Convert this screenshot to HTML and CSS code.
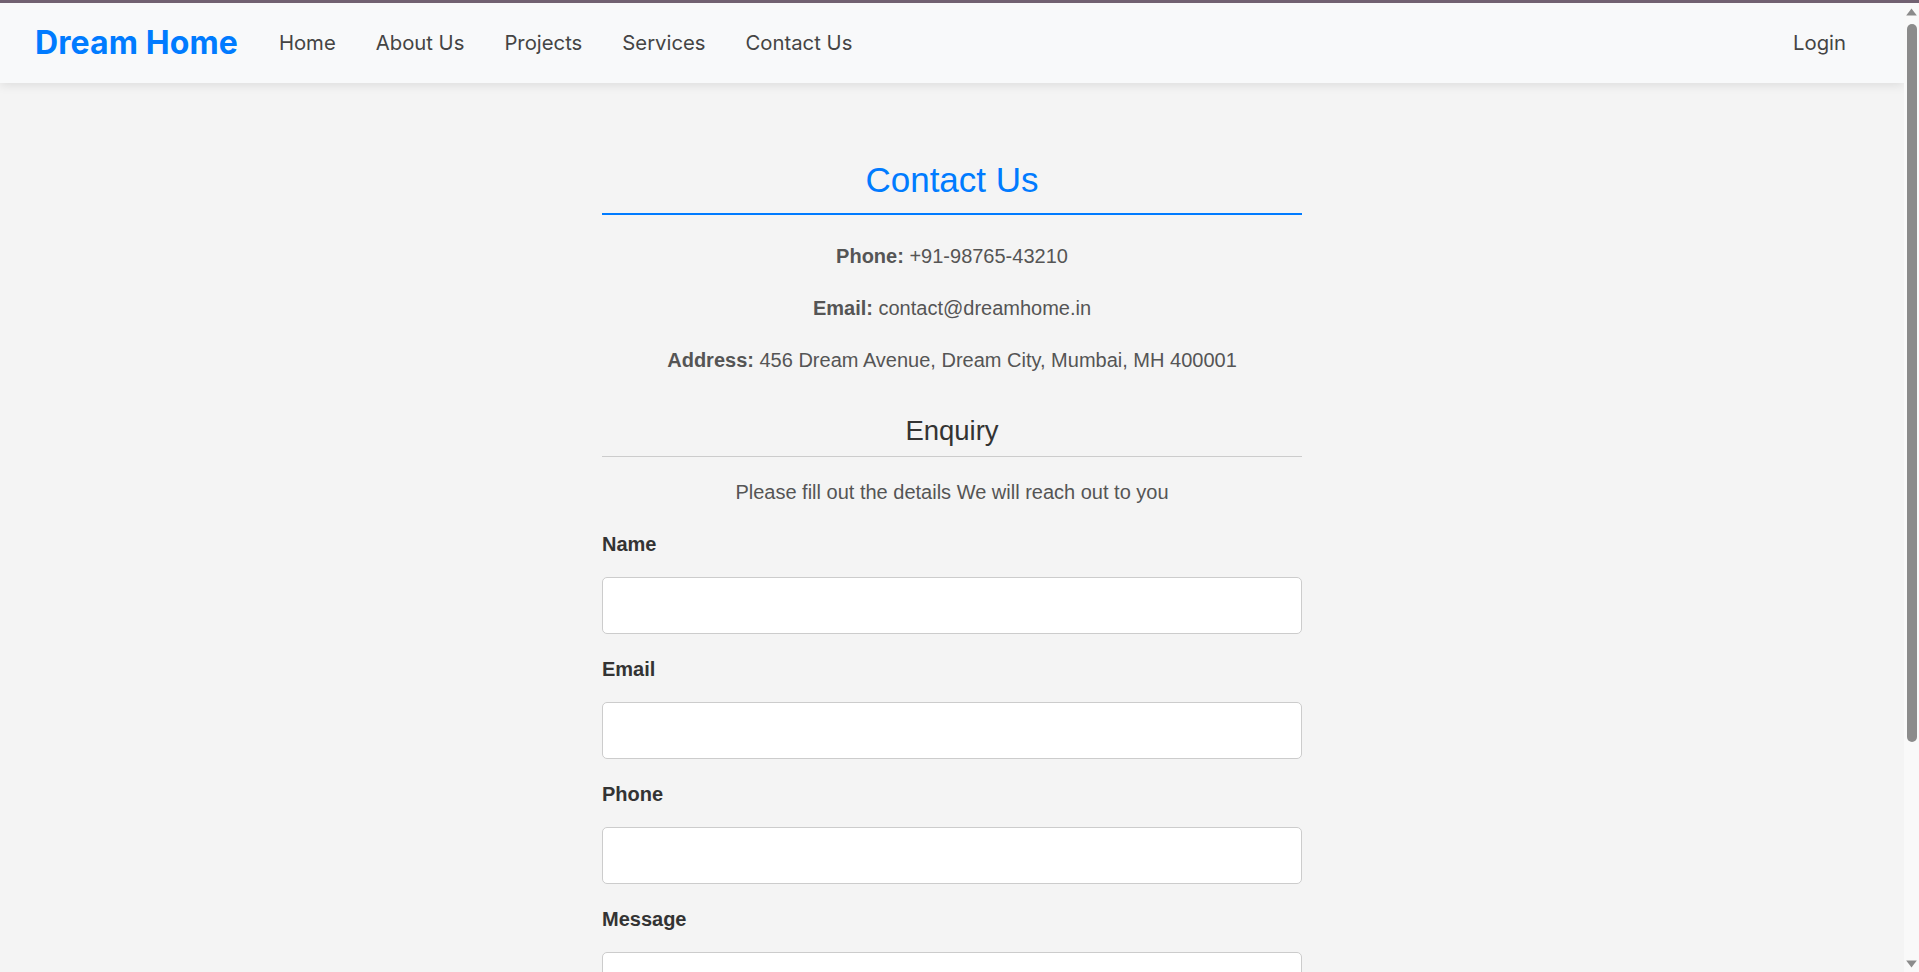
FILE: index.html
```html
<!DOCTYPE html>
<html lang="en">
<head>
<meta charset="utf-8">
<title>Contact Us - Dream Home</title>
<link rel="stylesheet" href="styles.css">
</head>
<body>
<div class="topline"></div>
<div class="frame">
  <div class="page">
    <header class="navbar">
      <a class="logo" href="#">Dream Home</a>
      <nav class="links">
        <a href="#">Home</a>
        <a href="#">About Us</a>
        <a href="#">Projects</a>
        <a href="#">Services</a>
        <a href="#">Contact Us</a>
      </nav>
      <a class="login" href="#">Login</a>
    </header>
    <main class="container">
      <h2 class="title">Contact Us</h2>
      <div class="info">
        <p><strong>Phone:</strong> +91-98765-43210</p>
        <p><strong>Email:</strong> contact@dreamhome.in</p>
        <p><strong>Address:</strong> 456 Dream Avenue, Dream City, Mumbai, MH 400001</p>
      </div>
      <h3 class="subtitle">Enquiry</h3>
      <p class="lead">Please fill out the details We will reach out to you</p>
      <form class="form">
        <label for="name">Name</label>
        <input id="name" type="text">
        <label for="email">Email</label>
        <input id="email" type="email">
        <label for="phone">Phone</label>
        <input id="phone" type="tel">
        <label for="message">Message</label>
        <textarea id="message"></textarea>
        <button type="submit">Submit</button>
      </form>
    </main>
  </div>
  <div class="scrollbar" aria-hidden="true">
    <svg class="arrow" width="11" height="8" viewBox="0 0 11 8"><path d="M5.5 0.5 L10.8 7.5 L0.2 7.5 Z" fill="#8b8b8b"/></svg>
    <div class="thumb"></div>
    <div class="spacer"></div>
    <svg class="arrow down" width="11" height="8" viewBox="0 0 11 8"><path d="M0.2 0.5 L10.8 0.5 L5.5 7.5 Z" fill="#8b8b8b"/></svg>
  </div>
</div>
</body>
</html>
```
FILE: styles.css
```css
html, body {
  margin: 0;
  padding: 0;
  height: 100%;
  overflow: hidden;
}
body {
  background: #f4f4f4;
  font-family: "Liberation Sans", Arial, sans-serif;
  color: #333;
  display: flex;
  flex-direction: column;
}
.topline {
  height: 3px;
  flex: none;
  background: #716171;
}
.frame {
  flex: 1;
  display: flex;
  min-height: 0;
}
.page {
  flex: 1;
  overflow-y: auto;
  scrollbar-width: none;
}
.scrollbar {
  flex: none;
  width: 15px;
  background: #f9f9f9;
  display: flex;
  flex-direction: column;
  align-items: center;
  padding: 5px 0 4px;
  box-sizing: border-box;
}
.arrow {
  display: block;
  flex: none;
}
.thumb {
  flex: none;
  width: 10px;
  height: 718px;
  margin-top: 8px;
  border-radius: 5px;
  background: #8b8b8b;
}
.spacer {
  flex: 1;
}
.navbar {
  height: 80px;
  box-sizing: border-box;
  padding: 0 38px 2px 35px;
  background: #f8f9fa;
  box-shadow: 0 2px 10px rgba(0, 0, 0, 0.1);
  display: flex;
  align-items: center;
  position: relative;
}
.navbar a {
  text-decoration: none;
}
.logo {
  font-family: Inter, "Noto Sans", sans-serif;
  font-weight: 700;
  font-size: 32px;
  letter-spacing: 0.1px;
  color: #007bff;
  margin-right: 21px;
}
.links {
  display: flex;
}
.links a, .login {
  font-family: Inter, "Noto Sans", sans-serif;
  font-size: 20.3px;
  color: #444;
  padding: 0 20px;
}
.login {
  margin-left: auto;
}
.container {
  width: 700px;
  margin: 0 auto;
  padding: 77px 0 52px;
}
.title {
  margin: 0;
  text-align: center;
  color: #007bff;
  font-weight: 400;
  font-size: 35px;
  line-height: 40px;
  padding-bottom: 13px;
  border-bottom: 2px solid #007bff;
}
.info {
  display: flex;
  flex-direction: column;
  gap: 29px;
  margin-top: 30px;
  text-align: center;
  color: #555;
}
.info p {
  margin: 0;
  font-size: 20px;
  line-height: 23px;
}
.subtitle {
  margin: 43px 0 0;
  text-align: center;
  font-weight: 400;
  font-size: 27.5px;
  line-height: 32px;
  color: #333;
  padding-bottom: 9px;
  border-bottom: 1px solid #ccc;
}
.lead {
  margin: 24px 0 0;
  text-align: center;
  color: #555;
  font-size: 20px;
  line-height: 23px;
}
.form {
  display: flex;
  flex-direction: column;
  margin-top: 29px;
}
.form label {
  font-weight: 700;
  font-size: 20px;
  line-height: 23px;
  color: #333;
  margin-bottom: 21px;
}
.form input, .form textarea {
  box-sizing: border-box;
  width: 100%;
  height: 57px;
  border: 1px solid #ccc;
  border-radius: 5px;
  background: #fff;
  font-family: "Liberation Sans", Arial, sans-serif;
  font-size: 20px;
  padding: 16px;
  margin: 0 0 24px;
}
.form textarea {
  height: 150px;
  resize: vertical;
  margin-bottom: 20px;
}
.form button {
  height: 48px;
  border: none;
  border-radius: 5px;
  background: #007bff;
  color: #fff;
  font-family: "Liberation Sans", Arial, sans-serif;
  font-size: 20px;
}
```
